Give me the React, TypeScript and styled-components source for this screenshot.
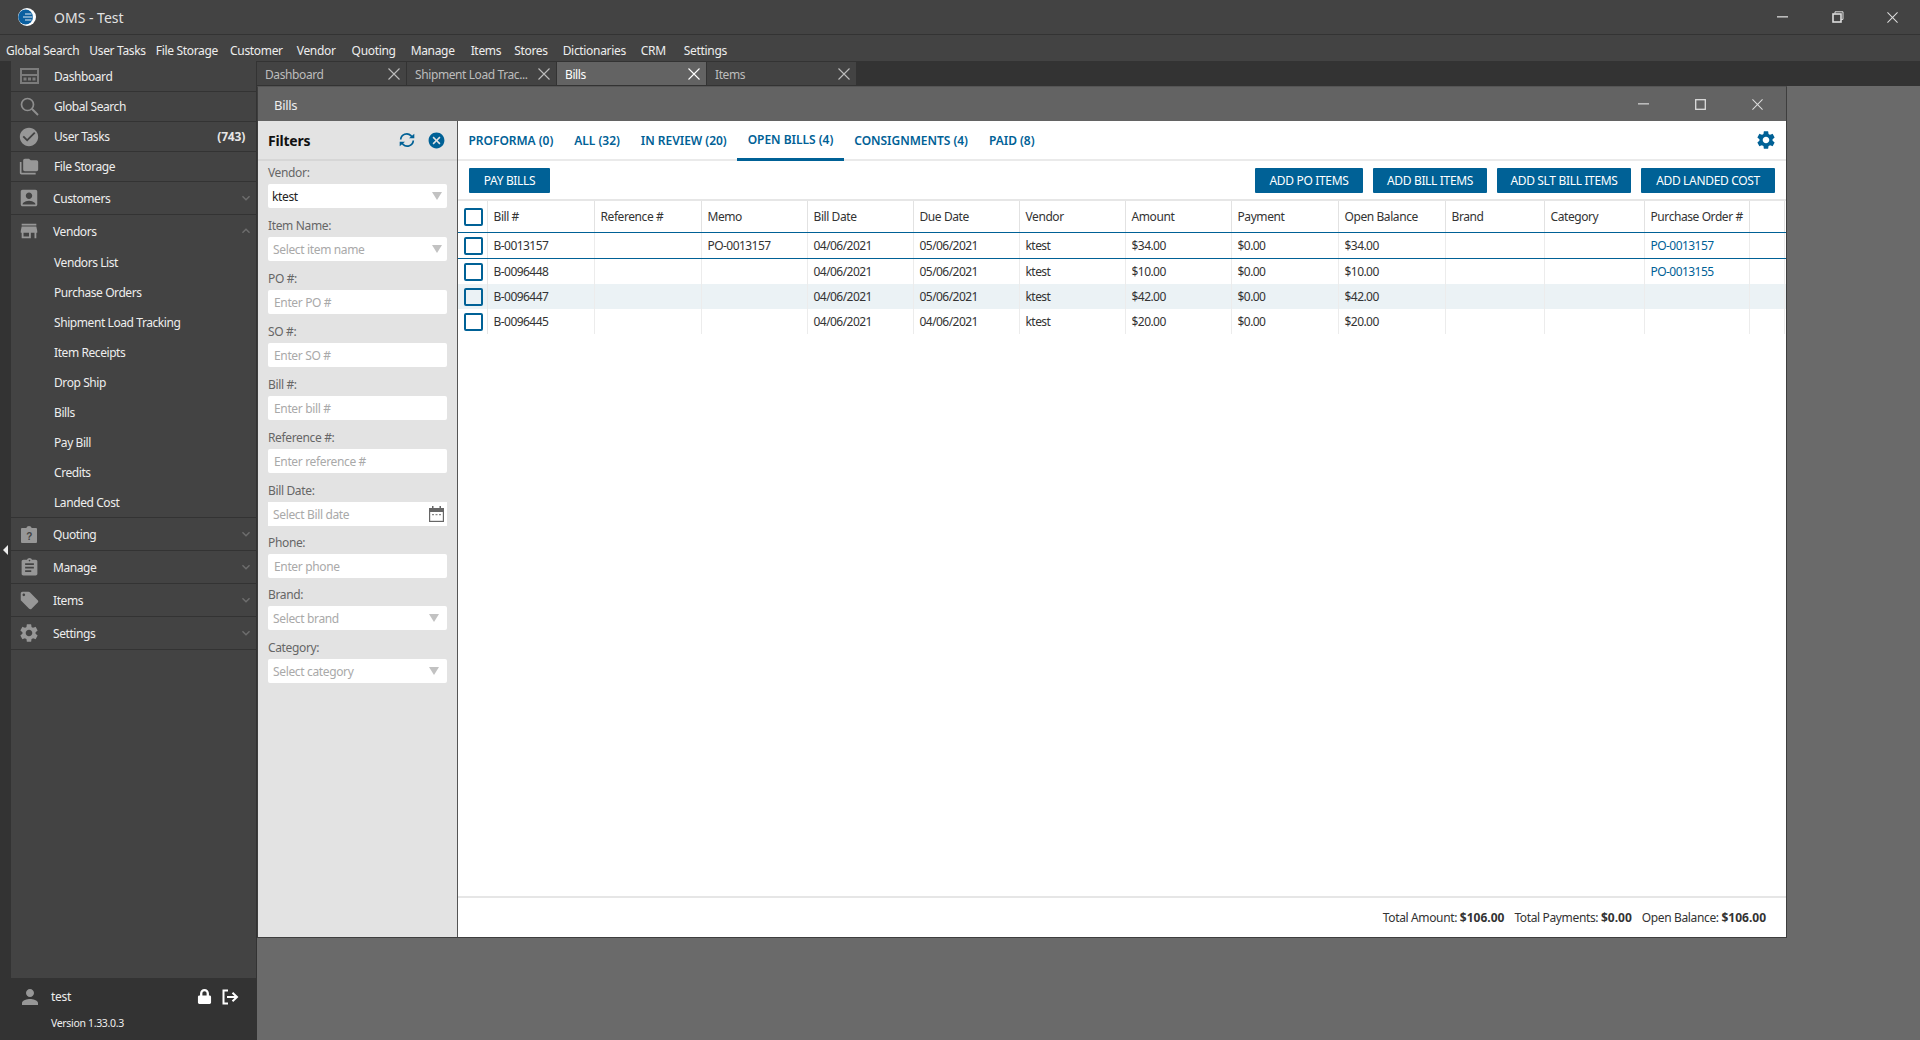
import React from "react";
import styled, { createGlobalStyle } from "styled-components";
import { MdCheckCircle, MdFolderCopy, MdAccountBox, MdStore, MdAssignment, MdLocalOffer, MdSettings, MdPerson, MdCancel, MdExpandMore, MdExpandLess } from "react-icons/md";
import { FaLock } from "react-icons/fa";

const BLUE = "#006196";
const FONT = `"Noto Sans", "Open Sans", "Liberation Sans", sans-serif`;

const Global = createGlobalStyle`
  html, body { margin: 0; padding: 0; width: 1920px; height: 1040px; overflow: hidden; background: #6a6a6a; }
  * { box-sizing: border-box; }
  body { font-family: ${FONT}; font-size: 12px; letter-spacing: -0.3px; color: #333; }
`;

const Shell = styled.div`
  width: 1920px; height: 1040px; display: flex; flex-direction: column;
`;
const TitleBar = styled.header`
  height: 35px; flex: none; display: flex; align-items: center; background: #434343;
  border-bottom: 1px solid #333; color: #ddd;
`;
const AppLogo = styled.svg`
  width: 18px; height: 18px; margin-left: 18px;
`;
const AppTitle = styled.span`
  margin-left: 18px; font-size: 14px; letter-spacing: 0; color: #e2e2e2; flex: 1;
`;
const CtlButton = styled.span<{ $w: number }>`
  width: ${(p) => p.$w}px; height: 100%; display: flex; align-items: center; justify-content: center; color: #ddd;
`;
const MenuBar = styled.nav`
  height: 26px; flex: none; display: flex; align-items: center; padding: 5px 0 0 6px;
  background: #434343; color: #eee;
`;
const MenuItem = styled.span<{ $gap: number }>`
  margin-right: ${(p) => p.$gap}px; letter-spacing: -0.32px;
`;
const Body = styled.div`
  flex: 1; display: flex; min-height: 0;
`;
const LeftCol = styled.aside`
  width: 257px; flex: none; display: flex; flex-direction: column; background: #333;
`;
const LeftTop = styled.div`
  flex: 1; display: flex; min-height: 0;
`;
const Strip = styled.div`
  width: 11px; flex: none; display: flex; align-items: flex-start; justify-content: center; padding-top: 484px;
`;
const Nav = styled.div`
  flex: 1; background: #434343; border-right: 1px solid #333; letter-spacing: -0.42px;
`;
const NavRow = styled.div<{ $h: number; $x: number; $open?: boolean }>`
  height: ${(p) => p.$h}px; display: flex; align-items: center; position: relative; color: #eee;
  border-bottom: ${(p) => (p.$open ? "0" : "1px solid #333")};
  span.label { margin-left: ${(p) => p.$x}px; flex: 1; }
`;
const NavIcon = styled.span`
  width: 36px; flex: none; display: flex; justify-content: center; color: #979797;
`;
const Badge = styled.b`
  margin-right: 11px; font-weight: 700; color: #e6e6e6; letter-spacing: -0.2px;
`;
const Chevron = styled.span`
  margin-right: 2px; display: flex; color: #6e6e6e;
`;
const SubItem = styled.div`
  height: 30px; flex: none; display: flex; align-items: center; padding-left: 43px; color: #eee;
`;
const SubList = styled.div`
  height: 271px; border-bottom: 1px solid #333;
`;
const UserFoot = styled.div`
  height: 62px; flex: none; display: grid; grid-template-columns: 51px 1fr 26px 26px 14px; grid-template-rows: 37px 15px;
  align-items: center; color: #eee;
`;
const UserIcon = styled.span`
  display: flex; justify-content: flex-end; padding-right: 9px; padding-top: 1px; color: #979797;
`;
const FootBtn = styled.span`
  display: flex; justify-content: center; color: #fff;
`;
const Version = styled.span`
  grid-column: 2 / 6; font-size: 10.5px; letter-spacing: -0.33px;
`;
const Right = styled.main`
  flex: 1; display: flex; flex-direction: column; min-width: 0;
`;
const TabStrip = styled.div`
  height: 25px; flex: none; background: #333; display: flex; padding-top: 1px;
`;
const DocTab = styled.div<{ $active?: boolean }>`
  width: 150px; height: 23px; display: flex; align-items: center; padding: 1px 6px 0 8px; border-right: 1px solid #333;
  letter-spacing: -0.4px;
  background: ${(p) => (p.$active ? "#636363" : "#434343")};
  color: ${(p) => (p.$active ? "#fff" : "#bdbdbd")};
  span { flex: 1; overflow: hidden; white-space: nowrap; }
`;
const Workspace = styled.div`
  flex: 1; background: #6a6a6a; min-height: 0;
`;
const Win = styled.section`
  width: 1530px; height: 852px; display: flex; flex-direction: column; border: 1px solid #3e3e3e; border-top: 1px solid #555; background: #fff;
`;
const WinHead = styled.div`
  height: 34px; flex: none; display: flex; align-items: center; background: #636363; color: #eee;
  span.t { flex: 1; padding: 1px 0 0 16px; font-size: 13px; letter-spacing: -0.3px; }
`;
const WinBody = styled.div`
  flex: 1; display: flex; min-height: 0;
`;
const FilterPane = styled.div`
  width: 200px; flex: none; background: #e3e3e3; border-right: 1px solid #555; letter-spacing: -0.35px;
`;
const FilterHead = styled.div`
  height: 40px; display: flex; align-items: center; padding: 0 11px 0 10px; gap: 11px; border-bottom: 2px solid #d6d6d6;
  b { flex: 1; font-size: 14px; color: #111; font-weight: 700; letter-spacing: -0.2px; }
`;
const HeadIcon = styled.span`
  display: flex; color: ${BLUE};
`;
const FieldList = styled.div`
  padding: 1px 10px 0;
`;
const Field = styled.div<{ $h?: number }>`
  height: ${(p) => p.$h ?? 53}px;
  label { display: block; height: 22px; line-height: 22px; color: #666; font-size: 12px; }
`;
const InputBox = styled.div<{ $muted?: boolean; $pl: number; $square?: boolean }>`
  width: 179px; height: 24px; background: #fff; border-radius: ${(p) => (p.$square ? 0 : 2)}px;
  display: flex; align-items: center; justify-content: space-between;
  padding: 0 ${(p) => (p.$square ? 3 : 5)}px 0 ${(p) => p.$pl}px;
  color: ${(p) => (p.$muted ? "#a9a9a9" : "#222")};
`;
const Caret = styled.span<{ $shift: number }>`
  width: 0; height: 0; border-left: 5px solid transparent; border-right: 5px solid transparent; border-top: 8px solid #c2c2c2;
  margin-right: ${(p) => p.$shift}px;
`;
const Content = styled.div`
  flex: 1; display: flex; flex-direction: column; min-width: 0;
`;
const TabsRow = styled.div`
  height: 40px; flex: none; display: flex; align-items: stretch; border-bottom: 2px solid #eaeaea; padding-right: 8px;
`;
const ViewTab = styled.div<{ $active?: boolean }>`
  padding: 0 10.5px; display: flex; align-items: center; color: ${BLUE}; font-weight: 600;
  height: ${(p) => (p.$active ? "40px" : "39px")}; white-space: nowrap; letter-spacing: -0.03px;
  border-bottom: ${(p) => (p.$active ? `3px solid ${BLUE}` : "0")};
`;
const GearWrap = styled.span`
  margin-left: auto; display: flex; align-items: center; color: ${BLUE}; padding-right: 1px;
`;
const ActionRow = styled.div`
  height: 40px; flex: none; display: flex; align-items: center; gap: 10px; padding: 0 11px; border-bottom: 2px solid #e6e6e6;
`;
const Btn = styled.span<{ $w: number; $push?: boolean }>`
  width: ${(p) => p.$w}px; height: 25px; display: flex; align-items: center; justify-content: center; background: ${BLUE};
  color: #fff; border-radius: 1px; margin-left: ${(p) => (p.$push ? "auto" : "0")}; white-space: nowrap; letter-spacing: -0.33px;
`;
const TableArea = styled.div`
  flex: 1; min-height: 0; border-bottom: 2px solid #e6e6e6; overflow: hidden;
`;
const COLS = "30px 107px 107px 106px 106px 106px 106px 106px 107px 107px 99px 100px 105px 35px";
const HeadRow = styled.div`
  display: grid; grid-template-columns: ${COLS}; height: 31px; color: #333;
`;
const HCell = styled.div`
  display: flex; align-items: center; padding-left: 5.5px; border-right: 1px solid #e2e2e2; white-space: nowrap; letter-spacing: -0.42px;
`;
const Row = styled.div<{ $sel?: boolean; $alt?: boolean; $h: number }>`
  display: grid; grid-template-columns: ${COLS}; height: ${(p) => p.$h}px; background: ${(p) => (p.$alt ? "#ebf2f5" : "#fff")};
  border-top: ${(p) => (p.$sel ? `1px solid ${BLUE}` : "0")}; border-bottom: ${(p) => (p.$sel ? `1px solid ${BLUE}` : "0")};
`;
const Cell = styled.div<{ $link?: boolean }>`
  display: flex; align-items: center; padding-left: 5.5px; border-right: 1px solid #ececec; white-space: nowrap; letter-spacing: -0.55px;
  color: ${(p) => (p.$link ? BLUE : "#333")};
`;
const CheckCell = styled.div`
  display: flex; align-items: center; justify-content: flex-end; padding-right: 4px; border-right: 1px solid #e6e6e6;
`;
const Check = styled.span`
  width: 19px; height: 18px; border: 2px solid ${BLUE}; border-radius: 2px; display: block;
`;
const Totals = styled.div`
  height: 39px; flex: none; display: flex; align-items: center; justify-content: flex-end; gap: 10px; padding-right: 20px; color: #333; letter-spacing: -0.36px;
  b { font-weight: 700; letter-spacing: 0; }
`;

const X = ({ s = 12, c = "currentColor" }: { s?: number; c?: string }) => (
  <svg width={s} height={s} viewBox="0 0 12 12"><path d="M.5.5l11 11M11.5.5l-11 11" stroke={c} strokeWidth="1.1" fill="none" /></svg>
);
const Min = () => <svg width="12" height="2" viewBox="0 0 12 2"><rect width="11" height="1.6" fill="#bbb" /></svg>;
const Restore = () => (
  <svg width="12" height="12" viewBox="0 0 12 12" fill="none" stroke="#ddd"><path d="M3 2.500V.8h8v7.600H9" /><rect x="1" y="3" width="8" height="8" strokeWidth="1.6" /></svg>
);
const Maxi = () => <svg width="11" height="11" viewBox="0 0 11 11"><rect x=".7" y=".7" width="9.6" height="9.6" fill="none" stroke="#ddd" strokeWidth="1.3" /></svg>;

const DashIcon = () => (
  <svg width="19" height="16" viewBox="0 0 19 16" fill="#7c7c7c">
    <path fillRule="evenodd" d="M0 0h19v16H0zM2 2v4h15V2zM2 8v6h15V8z" />
    <path d="M3.500 9.500h3v3h-3zM8 9.500h3v3H8zM12.500 9.500h3v3h-3z" />
  </svg>
);
const SearchIcon = () => (
  <svg width="19" height="19" viewBox="0 0 19 19" fill="none" stroke="#8f8f8f">
    <circle cx="7.500" cy="7.500" r="6" strokeWidth="1.700" />
    <path d="M11.800 11.800L18 18" strokeWidth="2" />
  </svg>
);
const QuoteIcon = () => (
  <svg width="18" height="18" viewBox="0 0 18 18">
    <path fill="#979797" d="M2 3h4.300a2.800 2.800 0 0 1 5.400 0H16a1 1 0 0 1 1 1v13a1 1 0 0 1-1 1H2a1 1 0 0 1-1-1V4a1 1 0 0 1 1-1z" />
    <text x="9" y="14.500" textAnchor="middle" fontSize="10" fontWeight="700" fill="#434343" fontFamily="Liberation Sans, sans-serif">?</text>
  </svg>
);
const Calendar = () => (
  <svg width="15" height="16" viewBox="0 0 15 16">
    <path fill="#666" d="M3 0h1.500v2h6V0H12v2h3v14H0V2h3z" />
    <rect x="1.200" y="6" width="12.600" height="8.800" fill="#fff" />
    <path fill="#888" d="M3 8h2v1.200H3zM6.500 8h2v1.200h-2zM10 8h2v1.200h-2z" />
  </svg>
);
const Logout = () => (
  <svg width="17" height="16" viewBox="0 0 17 16" fill="none" stroke="#fff" strokeWidth="2">
    <path d="M6 1.500H1.500v13H6" /><path d="M5 8h9" /><path d="M10.500 3.700L15 8l-4.500 4.300" />
  </svg>
);
const SyncIcon = () => (
  <svg width="18" height="16" viewBox="0 0 18 16" fill="none" stroke={BLUE} strokeWidth="1.700">
    <path d="M2.700 7.500A6 6 0 0 1 13 3.700l1 1.300" />
    <path d="M15.300 8.500A6 6 0 0 1 5 12.300L4 11" />
    <path d="M11 6.300h5.300V1.800z" fill={BLUE} stroke="none" />
    <path d="M7 9.700H1.700v4.500z" fill={BLUE} stroke="none" />
  </svg>
);
const Logo = () => (
  <AppLogo viewBox="0 0 18 18">
    <circle cx="9" cy="9" r="9" fill="#fff" />
    <circle cx="7.600" cy="9" r="7.400" fill="#0a5fa0" />
    <path d="M7 6h6.500M5 9h9.500M7 12h6.500" stroke="#dfe9f2" strokeWidth="1.200" fill="none" />
  </AppLogo>
);

const menu: [string, number][] = [["Global Search", 10], ["User Tasks", 10], ["File Storage", 12], ["Customer", 14], ["Vendor", 16], ["Quoting", 15], ["Manage", 16], ["Items", 13], ["Stores", 15], ["Dictionaries", 15], ["CRM", 18], ["Settings", 0]];
const subs = ["Vendors List", "Purchase Orders", "Shipment Load Tracking", "Item Receipts", "Drop Ship", "Bills", "Pay Bill", "Credits", "Landed Cost"];
const ICON = 20;
const tabs = [
  { t: "Dashboard" },
  { t: "Shipment Load Trac..." },
  { t: "Bills", a: true },
  { t: "Items" },
];
const fields: { l: string; v?: string; p?: string; caret?: number; pl: number; cal?: boolean; h?: number }[] = [
  { l: "Vendor:", v: "ktest", caret: 0, pl: 4 },
  { l: "Item Name:", p: "Select item name", caret: 0, pl: 5 },
  { l: "PO #:", p: "Enter PO #", pl: 6 },
  { l: "SO #:", p: "Enter SO #", pl: 6 },
  { l: "Bill #:", p: "Enter bill #", pl: 6 },
  { l: "Reference #:", p: "Enter reference #", pl: 6 },
  { l: "Bill Date:", p: "Select Bill date", cal: true, h: 52, pl: 5 },
  { l: "Phone:", p: "Enter phone", h: 52, pl: 6 },
  { l: "Brand:", p: "Select brand", caret: 3, pl: 5 },
  { l: "Category:", p: "Select category", caret: 3, pl: 5 },
];
const heads = ["Bill #", "Reference #", "Memo", "Bill Date", "Due Date", "Vendor", "Amount", "Payment", "Open Balance", "Brand", "Category", "Purchase Order #", ""];
const rows = [
  { c: ["B-0013157", "", "PO-0013157", "04/06/2021", "05/06/2021", "ktest", "$34.00", "$0.00", "$34.00", "", "", "PO-0013157", ""], sel: true, h: 27 },
  { c: ["B-0096448", "", "", "04/06/2021", "05/06/2021", "ktest", "$10.00", "$0.00", "$10.00", "", "", "PO-0013155", ""], h: 25 },
  { c: ["B-0096447", "", "", "04/06/2021", "05/06/2021", "ktest", "$42.00", "$0.00", "$42.00", "", "", "", ""], alt: true, h: 25 },
  { c: ["B-0096445", "", "", "04/06/2021", "04/06/2021", "ktest", "$20.00", "$0.00", "$20.00", "", "", "", ""], h: 25 },
];

export default function App() {
  return (
    <Shell>
      <Global />
      <TitleBar>
        <Logo />
        <AppTitle>OMS - Test</AppTitle>
        <CtlButton $w={55}><Min /></CtlButton>
        <CtlButton $w={55}><Restore /></CtlButton>
        <CtlButton $w={55}><X s={11} /></CtlButton>
      </TitleBar>
      <MenuBar>{menu.map(([m, g]) => <MenuItem key={m} $gap={g}>{m}</MenuItem>)}</MenuBar>
      <Body>
        <LeftCol>
          <LeftTop>
            <Strip>
              <svg width="5" height="10" viewBox="0 0 5 10"><path d="M5 0v10L0 5z" fill="#eee" /></svg>
            </Strip>
            <Nav>
              <NavRow $h={31} $x={7}><NavIcon><DashIcon /></NavIcon><span className="label">Dashboard</span></NavRow>
              <NavRow $h={30} $x={7}><NavIcon><SearchIcon /></NavIcon><span className="label">Global Search</span></NavRow>
              <NavRow $h={30} $x={7}><NavIcon><MdCheckCircle size={22} /></NavIcon><span className="label">User Tasks</span><Badge>(743)</Badge></NavRow>
              <NavRow $h={30} $x={7}><NavIcon><MdFolderCopy size={20} /></NavIcon><span className="label">File Storage</span></NavRow>
              <NavRow $h={33} $x={6}><NavIcon><MdAccountBox size={ICON + 2} /></NavIcon><span className="label">Customers</span><Chevron><MdExpandMore size={16} /></Chevron></NavRow>
              <NavRow $h={32} $x={6} $open><NavIcon><MdStore size={ICON + 2} /></NavIcon><span className="label">Vendors</span><Chevron><MdExpandLess size={16} /></Chevron></NavRow>
              <SubList>{subs.map((s) => <SubItem key={s}>{s}</SubItem>)}</SubList>
              <NavRow $h={33} $x={6}><NavIcon><QuoteIcon /></NavIcon><span className="label">Quoting</span><Chevron><MdExpandMore size={16} /></Chevron></NavRow>
              <NavRow $h={33} $x={6}><NavIcon><MdAssignment size={ICON + 1} /></NavIcon><span className="label">Manage</span><Chevron><MdExpandMore size={16} /></Chevron></NavRow>
              <NavRow $h={33} $x={6}><NavIcon><MdLocalOffer size={ICON + 1} /></NavIcon><span className="label">Items</span><Chevron><MdExpandMore size={16} /></Chevron></NavRow>
              <NavRow $h={33} $x={6}><NavIcon><MdSettings size={ICON + 2} /></NavIcon><span className="label">Settings</span><Chevron><MdExpandMore size={16} /></Chevron></NavRow>
            </Nav>
          </LeftTop>
          <UserFoot>
            <UserIcon><MdPerson size={24} /></UserIcon>
            <span>test</span>
            <FootBtn><FaLock size={15} /></FootBtn>
            <FootBtn><Logout /></FootBtn>
            <span />
            <span />
            <Version>Version 1.33.0.3</Version>
          </UserFoot>
        </LeftCol>
        <Right>
          <TabStrip>
            {tabs.map((t) => (
              <DocTab key={t.t} $active={t.a}><span>{t.t}</span><X /></DocTab>
            ))}
          </TabStrip>
          <Workspace>
            <Win>
              <WinHead>
                <span className="t">Bills</span>
                <CtlButton $w={57}><Min /></CtlButton>
                <CtlButton $w={57}><Maxi /></CtlButton>
                <CtlButton $w={57}><X s={11} /></CtlButton>
              </WinHead>
              <WinBody>
                <FilterPane>
                  <FilterHead>
                    <b>Filters</b>
                    <HeadIcon><SyncIcon /></HeadIcon>
                    <HeadIcon><MdCancel size={19} /></HeadIcon>
                  </FilterHead>
                  <FieldList>
                    {fields.map((f) => (
                      <Field key={f.l} $h={f.h}>
                        <label>{f.l}</label>
                        <InputBox $muted={!f.v} $pl={f.pl} $square={f.cal}>
                          <span>{f.v ?? f.p}</span>
                          {f.caret !== undefined && <Caret $shift={f.caret} />}
                          {f.cal && <Calendar />}
                        </InputBox>
                      </Field>
                    ))}
                  </FieldList>
                </FilterPane>
                <Content>
                  <TabsRow>
                    <ViewTab>PROFORMA (0)</ViewTab>
                    <ViewTab>ALL (32)</ViewTab>
                    <ViewTab>IN REVIEW (20)</ViewTab>
                    <ViewTab $active>OPEN BILLS (4)</ViewTab>
                    <ViewTab>CONSIGNMENTS (4)</ViewTab>
                    <ViewTab>PAID (8)</ViewTab>
                    <GearWrap><MdSettings size={22} /></GearWrap>
                  </TabsRow>
                  <ActionRow>
                    <Btn $w={81}>PAY BILLS</Btn>
                    <Btn $w={108} $push>ADD PO ITEMS</Btn>
                    <Btn $w={114}>ADD BILL ITEMS</Btn>
                    <Btn $w={134}>ADD SLT BILL ITEMS</Btn>
                    <Btn $w={134}>ADD LANDED COST</Btn>
                  </ActionRow>
                  <TableArea>
                    <HeadRow>
                      <CheckCell><Check /></CheckCell>
                      {heads.map((h, i) => <HCell key={i}>{h}</HCell>)}
                    </HeadRow>
                    {rows.map((r) => (
                      <Row key={r.c[0]} $sel={r.sel} $alt={r.alt} $h={r.h}>
                        <CheckCell><Check /></CheckCell>
                        {r.c.map((c, i) => <Cell key={i} $link={i === 11}>{c}</Cell>)}
                      </Row>
                    ))}
                  </TableArea>
                  <Totals>
                    <span>Total Amount: <b>$106.00</b></span>
                    <span>Total Payments: <b>$0.00</b></span>
                    <span>Open Balance: <b>$106.00</b></span>
                  </Totals>
                </Content>
              </WinBody>
            </Win>
          </Workspace>
        </Right>
      </Body>
    </Shell>
  );
}
